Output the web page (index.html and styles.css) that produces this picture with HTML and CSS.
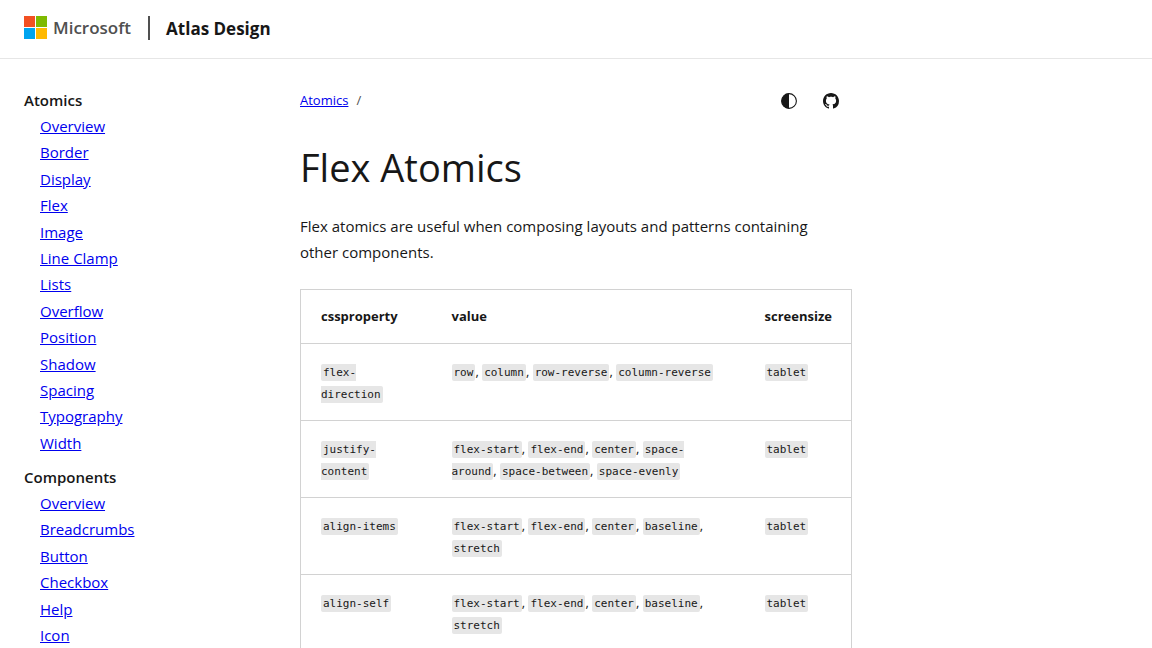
FILE: index.html
```html
<!DOCTYPE html>
<html lang="en">
<head>
<meta charset="utf-8">
<meta name="viewport" content="width=device-width, initial-scale=1">
<title>Flex Atomics | Atlas Design</title>
<link rel="stylesheet" href="styles.css">
</head>
<body>
<header class="site-header">
  <div class="brand">
    <svg class="brand-mark" viewBox="0 0 23 23" aria-hidden="true">
      <path fill="#f25022" d="M0 0h11v11H0z"/>
      <path fill="#7fba00" d="M12 0h11v11H12z"/>
      <path fill="#00a4ef" d="M0 12h11v11H0z"/>
      <path fill="#ffb900" d="M12 12h11v11H12z"/>
    </svg>
    <span class="brand-name">Microsoft</span>
  </div>
  <span class="site-name">Atlas Design</span>
</header>
<div class="layout">
  <nav class="sidebar" aria-label="Documentation">
    <section class="nav-group">
      <p class="nav-heading">Atomics</p>
      <ul class="nav-list">
        <li><a href="#">Overview</a></li>
        <li><a href="#">Border</a></li>
        <li><a href="#">Display</a></li>
        <li><a href="#">Flex</a></li>
        <li><a href="#">Image</a></li>
        <li><a href="#">Line Clamp</a></li>
        <li><a href="#">Lists</a></li>
        <li><a href="#">Overflow</a></li>
        <li><a href="#">Position</a></li>
        <li><a href="#">Shadow</a></li>
        <li><a href="#">Spacing</a></li>
        <li><a href="#">Typography</a></li>
        <li><a href="#">Width</a></li>
      </ul>
    </section>
    <section class="nav-group">
      <p class="nav-heading">Components</p>
      <ul class="nav-list">
        <li><a href="#">Overview</a></li>
        <li><a href="#">Breadcrumbs</a></li>
        <li><a href="#">Button</a></li>
        <li><a href="#">Checkbox</a></li>
        <li><a href="#">Help</a></li>
        <li><a href="#">Icon</a></li>
      </ul>
    </section>
  </nav>
  <main class="content">
    <div class="toolbar">
      <nav class="breadcrumbs" aria-label="Breadcrumbs"><a href="#">Atomics</a><span class="separator">/</span></nav>
      <div class="actions">
        <button class="icon-button" type="button" aria-label="Change theme">
          <svg viewBox="0 0 16 16" aria-hidden="true"><circle cx="8" cy="8" r="7.4" fill="none" stroke="currentColor" stroke-width="1.1"/><path fill="currentColor" d="M8 .6v14.8A7.4 7.4 0 0 1 8 .6z"/></svg>
        </button>
        <a class="icon-button" href="#" aria-label="GitHub">
          <svg viewBox="0 0 16 16" aria-hidden="true"><path fill="currentColor" d="M8 0C3.58 0 0 3.58 0 8c0 3.54 2.29 6.53 5.47 7.59.4.07.55-.17.55-.38 0-.19-.01-.82-.01-1.49-2.01.37-2.53-.49-2.69-.94-.09-.23-.48-.94-.82-1.13-.28-.15-.68-.52-.01-.53.63-.01 1.08.58 1.23.82.72 1.21 1.87.87 2.33.66.07-.52.28-.87.51-1.07-1.78-.2-3.64-.89-3.64-3.95 0-.87.31-1.59.82-2.15-.08-.2-.36-1.02.08-2.12 0 0 .67-.21 2.2.82.64-.18 1.32-.27 2-.27s1.36.09 2 .27c1.53-1.04 2.2-.82 2.2-.82.44 1.1.16 1.92.08 2.12.51.56.82 1.27.82 2.15 0 3.07-1.87 3.75-3.65 3.95.29.25.54.73.54 1.48 0 1.07-.01 1.93-.01 2.2 0 .21.15.46.55.38A8.01 8.01 0 0 0 16 8c0-4.42-3.58-8-8-8z"/></svg>
        </a>
      </div>
    </div>
    <h1 class="title">Flex Atomics</h1>
    <p class="intro">Flex atomics are useful when composing layouts and patterns containing other components.</p>
    <table class="table">
      <thead>
        <tr><th class="col-property" scope="col">cssproperty</th><th class="col-value" scope="col">value</th><th scope="col">screensize</th></tr>
      </thead>
      <tbody>
        <tr>
          <td><code>flex-direction</code></td>
          <td><code>row</code>, <code>column</code>, <code>row-reverse</code>, <code>column-reverse</code></td>
          <td><code>tablet</code></td>
        </tr>
        <tr>
          <td><code>justify-content</code></td>
          <td><code>flex-start</code>, <code>flex-end</code>, <code>center</code>, <code>space-around</code>, <code>space-between</code>, <code>space-evenly</code></td>
          <td><code>tablet</code></td>
        </tr>
        <tr>
          <td><code>align-items</code></td>
          <td><code>flex-start</code>, <code>flex-end</code>, <code>center</code>, <code>baseline</code>, <code>stretch</code></td>
          <td><code>tablet</code></td>
        </tr>
        <tr>
          <td><code>align-self</code></td>
          <td><code>flex-start</code>, <code>flex-end</code>, <code>center</code>, <code>baseline</code>, <code>stretch</code></td>
          <td><code>tablet</code></td>
        </tr>
      </tbody>
    </table>
  </main>
</div>
</body>
</html>
```
FILE: styles.css
```css
* {
  box-sizing: border-box;
}

body {
  margin: 0;
  background: #fff;
  color: #171717;
  font-family: "Segoe UI", "Open Sans", "Noto Sans", sans-serif;
  font-size: 16px;
  line-height: 1.65;
}

a {
  color: #00e;
}

.site-header {
  display: flex;
  align-items: flex-start;
  gap: 16px;
  padding: 16px 24px;
  border-bottom: 1px solid #e6e6e6;
  line-height: 26px;
}

.brand {
  display: flex;
  align-items: flex-start;
  gap: 6px;
  padding-right: 17px;
  border-right: 2px solid #505050;
  line-height: 24px;
}

.brand-mark {
  width: 23px;
  height: 23px;
}

.brand-name {
  color: #505050;
  font-size: 17px;
  font-weight: 600;
}

.site-name {
  font-size: 17px;
  font-weight: 700;
}

.layout {
  display: grid;
  grid-template-columns: 1fr 2fr 1fr;
  padding: 28px 24px;
}

.nav-group {
  margin-bottom: 8px;
}

.nav-heading {
  margin: 0;
  font-size: 15px;
  font-weight: 600;
  line-height: 26px;
}

.nav-list {
  margin: 0;
  padding: 0 0 0 16px;
  list-style: none;
}

.nav-list a {
  font-size: 15px;
}

.toolbar {
  display: flex;
  align-items: center;
  justify-content: space-between;
  padding-right: 7px;
}

.breadcrumbs {
  display: flex;
  gap: 8px;
  font-size: 13px;
}

.separator {
  color: #505050;
}

.actions {
  display: flex;
  gap: 14px;
}

.icon-button {
  display: flex;
  padding: 6px;
  border: 0;
  background: none;
  color: #171717;
}

.icon-button svg {
  width: 16px;
  height: 16px;
}

.title {
  margin: 26px 0 20px;
  font-size: 38px;
  font-weight: 400;
  line-height: 52px;
}

.intro {
  margin: 0 0 24px;
  padding-right: 16px;
  font-size: 15px;
  line-height: 26px;
}

.table {
  width: 100%;
  table-layout: fixed;
  border: 1px solid #d2d2d2;
  border-collapse: collapse;
  font-size: 13px;
  line-height: 22px;
}

.table th,
.table td {
  padding: 16px 20px;
  border-bottom: 1px solid #d2d2d2;
  text-align: left;
  vertical-align: top;
}

.table th {
  font-weight: 700;
  line-height: 21px;
}

.col-property {
  width: 131px;
}

.col-value {
  width: 313px;
}

.table code {
  padding: 2px;
  border-radius: 2px;
  background: #e6e6e6;
  font-family: Consolas, "DejaVu Sans Mono", monospace;
  font-size: 11px;
  line-height: 1;
}
```
